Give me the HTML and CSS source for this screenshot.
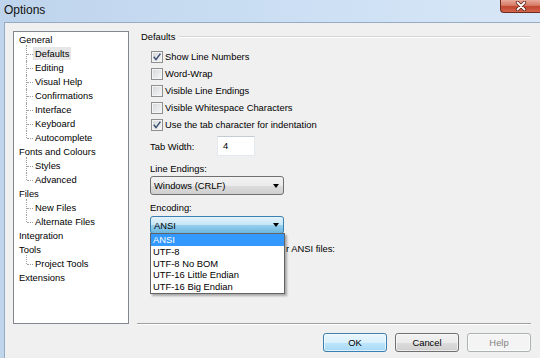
FILE: index.html
```html
<!DOCTYPE html>
<html lang="en">
<head>
  <meta charset="UTF-8">
  <title>Options</title>
  <link rel="stylesheet" href="styles.css">
</head>
<body>
  <div class="window">
    <div class="titlebar">
      <span class="title">Options</span>
      <span class="close">
        <svg width="12" height="10" viewBox="0 0 12 10">
          <path d="M2.5 1.5 L9.5 8.5 M9.5 1.5 L2.5 8.5" stroke="#5a1f16" stroke-width="3.4" stroke-linecap="round"/>
          <path d="M2.5 1.5 L9.5 8.5 M9.5 1.5 L2.5 8.5" stroke="#fff" stroke-width="1.8" stroke-linecap="round"/>
        </svg>
      </span>
    </div>

    <div class="client">
      <div class="main">
        <ul class="tree">
          <li>General
            <ul>
              <li><span class="selected">Defaults</span></li>
              <li>Editing</li>
              <li>Visual Help</li>
              <li>Confirmations</li>
              <li>Interface</li>
              <li>Keyboard</li>
              <li>Autocomplete</li>
            </ul>
          </li>
          <li>Fonts and Colours
            <ul>
              <li>Styles</li>
              <li>Advanced</li>
            </ul>
          </li>
          <li>Files
            <ul>
              <li>New Files</li>
              <li>Alternate Files</li>
            </ul>
          </li>
          <li>Integration</li>
          <li>Tools
            <ul>
              <li>Project Tools</li>
            </ul>
          </li>
          <li>Extensions</li>
        </ul>

        <div class="page">
          <div class="group-title"><span>Defaults</span><span class="rule"></span></div>

          <div class="checks">
            <div class="check"><span class="box"><svg width="10" height="10" viewBox="0 0 10 10"><path d="M1.8 4.8 L4 7.6 L8.4 1.6" fill="none" stroke="#3b4f72" stroke-width="1.5"/></svg></span>Show Line Numbers</div>
            <div class="check"><span class="box"></span>Word-Wrap</div>
            <div class="check"><span class="box"></span>Visible Line Endings</div>
            <div class="check"><span class="box"></span>Visible Whitespace Characters</div>
            <div class="check"><span class="box"><svg width="10" height="10" viewBox="0 0 10 10"><path d="M1.8 4.8 L4 7.6 L8.4 1.6" fill="none" stroke="#3b4f72" stroke-width="1.5"/></svg></span>Use the tab character for indentation</div>
          </div>

          <div class="field-row">
            <span class="field-label">Tab Width:</span>
            <span class="textbox">4</span>
          </div>

          <div class="label">Line Endings:</div>
          <div class="combo">Windows (CRLF)<span class="arrow"></span></div>

          <div class="label">Encoding:</div>
          <div class="combo-wrap">
            <div class="combo focused">ANSI<span class="arrow"></span></div>
            <ul class="dropdown">
              <li class="current">ANSI</li>
              <li>UTF-8</li>
              <li>UTF-8 No BOM</li>
              <li>UTF-16 Little Endian</li>
              <li>UTF-16 Big Endian</li>
            </ul>
          </div>

          <!-- only the tail of this label shows beside the open list -->
          <div class="label ansi-label">r ANSI files:</div>
        </div>
      </div>

      <div class="buttons">
        <button class="btn default">OK</button>
        <button class="btn">Cancel</button>
        <button class="btn" disabled>Help</button>
      </div>
    </div>
  </div>
</body>
</html>
```

FILE: styles.css
```css
body {
  margin: 0;
  background: #c0d5ec;
  font-family: "Liberation Sans", Arial, sans-serif;
  font-size: 9.4px;
  color: #000;
  overflow: hidden;
}
.window {
  height: 358px;
  display: flex;
  flex-direction: column;
}
.titlebar {
  height: 22px;
  flex: none;
  display: flex;
  justify-content: space-between;
  align-items: flex-start;
  background: linear-gradient(90deg, #bed4ec, #cde0f4 60%, #d8e7f7);
}
.title {
  font-size: 12px;
  line-height: 14px;
  padding: 3px 0 0 4px;
  color: #111;
}
.close {
  width: 40px;
  height: 13px;
  box-sizing: border-box;
  border: 1px solid #6e2b21;
  border-top: 0;
  border-right: 0;
  border-radius: 0 0 0 4px;
  background: linear-gradient(#e9aa9c, #d67a66 45%, #c2452f 55%, #d4664d);
  display: flex;
  align-items: center;
  justify-content: center;
}
.client {
  flex: 1;
  margin-left: 4px;
  background: #f0f0f0;
  border-top: 1px solid #97abc3;
  border-left: 1px solid #97abc3;
}
.main {
  display: flex;
  padding: 8px 0 0 8px;
}

/* tree */
.tree {
  box-sizing: border-box;
  width: 116px;
  height: 293px;
  margin: 0;
  padding: 1px 0 0 5px;
  list-style: none;
  background: #fff;
  border: 1px solid #828790;
  line-height: 14px;
}
.tree ul {
  list-style: none;
  margin: 0;
  padding: 0;
}
.tree ul li {
  position: relative;
  padding-left: 16px;
}
.tree ul li::before {
  content: "";
  position: absolute;
  left: 7px;
  top: 0;
  bottom: 0;
  border-left: 1px dotted #a0a0a0;
}
.tree ul li:first-child::before {
  top: -2px;
}
.tree ul li:last-child::before {
  bottom: 7px;
}
.tree ul li::after {
  content: "";
  position: absolute;
  left: 8px;
  top: 7px;
  width: 6px;
  border-top: 1px dotted #a0a0a0;
}
.selected {
  background: #e6e6e6;
  padding: 1px 2px;
  margin-left: -2px;
}

/* right page */
.page {
  box-sizing: border-box;
  width: 394px;
  height: 293px;
  margin-left: 8px;
  padding-left: 4px;
  border-bottom: 1px solid #a0a0a0;
  box-shadow: 0 1px 0 #fff;
}
.group-title {
  display: flex;
  align-items: center;
  gap: 4px;
  line-height: 11px;
}
.rule {
  flex: 1;
  margin-right: 1px;
  border-top: 1px solid #d5d5d5;
  border-bottom: 1px solid #fff;
}
.checks {
  margin: 6px 0 0 10px;
}
.check {
  height: 17px;
  display: flex;
  align-items: center;
  gap: 2px;
}
.box {
  box-sizing: border-box;
  width: 12px;
  height: 12px;
  border: 1px solid #8e8f8f;
  background: linear-gradient(135deg, #d3d6da, #f7f7f7);
  box-shadow: inset 0 0 0 1px #f4f4f4;
  display: flex;
  align-items: center;
  justify-content: center;
}
.field-row {
  display: flex;
  align-items: center;
  margin: 3px 0 0 9px;
}
.field-label {
  width: 67px;
}
.textbox {
  box-sizing: border-box;
  width: 38px;
  height: 20px;
  padding: 3px 0 0 5px;
  background: #fff;
  border: 1px solid #e3e9ef;
  border-top-color: #c6ccd3;
}
.label {
  margin: 7px 0 0 9px;
  line-height: 12px;
}
.combo {
  box-sizing: border-box;
  width: 134px;
  height: 19px;
  margin: 1px 0 0 9px;
  padding-left: 3px;
  display: flex;
  align-items: center;
  justify-content: space-between;
  border: 1px solid #707070;
  border-radius: 3px;
  background: linear-gradient(#f2f2f2, #ebebeb 50%, #dddddd 50%, #cfcfcf);
}
.arrow {
  width: 0;
  height: 0;
  margin-right: 4px;
  border-left: 3.5px solid transparent;
  border-right: 3.5px solid transparent;
  border-top: 4px solid #000;
}
.combo-wrap {
  position: relative;
  width: 134px;
  margin: 2px 0 0 9px;
}
.combo.focused {
  margin: 0;
  height: 18px;
  border-color: #3c7fb1;
  background: linear-gradient(#e5f4fc, #c4e5f6 50%, #98d1ef 50%, #6ab6de);
}
.dropdown {
  position: absolute;
  top: 17px;
  left: 0;
  width: 135px;
  box-sizing: border-box;
  margin: 0;
  padding: 0;
  list-style: none;
  background: #fff;
  border: 1px solid #646464;
  box-shadow: 2px 2px 2px rgba(0, 0, 0, 0.3);
  line-height: 11.75px;
  z-index: 2;
}
.dropdown li {
  padding-left: 2px;
}
.dropdown .current {
  background: #3399ff;
  color: #fff;
}
.ansi-label {
  margin: 9px 0 0 145px;
}

/* bottom buttons */
.buttons {
  display: flex;
  justify-content: flex-end;
  gap: 8px;
  margin-top: 9px;
  padding-right: 9px;
}
.btn {
  width: 64px;
  height: 19px;
  padding: 0;
  font: inherit;
  color: #000;
  border: 1px solid #707070;
  border-radius: 3px;
  background: linear-gradient(#f2f2f2, #ebebeb 50%, #dddddd 50%, #cfcfcf);
  box-shadow: inset 0 0 0 1px rgba(255, 255, 255, 0.6);
}
.btn.default {
  border-color: #3c7fb1;
  background: linear-gradient(#eaf6fd, #d9f0fc 50%, #bee6fd 50%, #a7d9f5);
}
.btn:disabled {
  color: #838383;
  border-color: #adb2b5;
  background: #f4f4f4;
}
```
